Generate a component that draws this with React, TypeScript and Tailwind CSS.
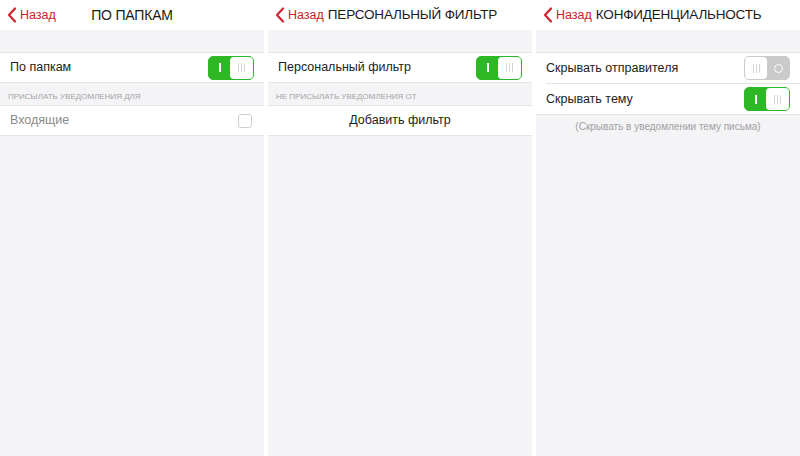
import React from "react";

const font = { fontFamily: '"Helvetica Neue", "Liberation Sans", Arial, sans-serif' };

function Chevron() {
  return (
    <svg width="10" height="16" viewBox="0 0 10 16" className="shrink-0">
      <path d="M8 1.5 L2 8 L8 14.5" fill="none" stroke="#d2232e" strokeWidth="2.2" strokeLinecap="round" strokeLinejoin="round" />
    </svg>
  );
}

function Lines({ color }: { color: string }) {
  return (
    <div className="flex gap-[2px] h-[9px]">
      <div className="w-px h-full" style={{ background: color }} />
      <div className="w-px h-full" style={{ background: color }} />
      <div className="w-px h-full" style={{ background: color }} />
    </div>
  );
}

function Toggle({ on }: { on: boolean }) {
  if (on) {
    return (
      <div className="w-[46px] h-[24px] rounded-[5px] bg-[#2fb826] border-[1.5px] border-[#2fb826] flex">
        <div className="w-[21px] h-full flex items-center justify-center">
          <div className="w-[2px] h-[9px] bg-white" />
        </div>
        <div className="flex-1 h-full bg-white rounded-[4px] flex items-center justify-center">
          <Lines color="#d4d4d4" />
        </div>
      </div>
    );
  }
  return (
    <div className="w-[46px] h-[24px] rounded-[5px] bg-[#cacaca] border-[1.5px] border-[#cacaca] flex">
      <div className="w-[22px] h-full bg-white rounded-[4px] flex items-center justify-center">
        <Lines color="#d4d4d4" />
      </div>
      <div className="flex-1 h-full flex items-center justify-center">
        <div className="w-[9px] h-[9px] rounded-full border-[1.5px] border-white" />
      </div>
    </div>
  );
}

function Header({ title, centered }: { title: string; centered?: boolean }) {
  return (
    <div className="relative h-[30px] bg-white flex items-center pl-[7px]">
      <div className="flex items-center gap-[3px]">
        <Chevron />
        <span className="text-[12.5px] text-[#c9202b]">Назад</span>
      </div>
      {centered ? (
        <div className="absolute inset-0 flex items-center justify-center pointer-events-none">
          <span className="text-[14px] text-[#1a1a1a] tracking-[-0.2px]">{title}</span>
        </div>
      ) : (
        <span className="ml-[4px] text-[13.5px] text-[#1a1a1a] tracking-[-0.2px]">{title}</span>
      )}
    </div>
  );
}

function Panel({ children }: { children: React.ReactNode }) {
  return <div className="w-[264px] h-[456px] bg-[#f4f4f6] flex flex-col">{children}</div>;
}

export default function App() {
  return (
    <div className="w-[800px] h-[456px] bg-white flex gap-[4px] overflow-hidden" style={font}>
      <Panel>
        <Header title="ПО ПАПКАМ" centered />
        <div className="h-[22px]" />
        <div className="h-[31px] bg-white border-y border-[#e4e4e6] flex items-center justify-between pl-[10px] pr-[10px]">
          <span className="text-[12.5px] text-[#222]">По папкам</span>
          <Toggle on />
        </div>
        <div className="h-[22px] flex items-end pb-[2px] pl-[8px]">
          <span className="text-[8px] text-[#a3a3a3] uppercase">Присылать уведомления для</span>
        </div>
        <div className="h-[31px] bg-white border-y border-[#e4e4e6] flex items-center justify-between pl-[10px] pr-[12px]">
          <span className="text-[12.5px] text-[#8a8a8a]">Входящие</span>
          <div className="w-[14px] h-[14px] rounded-[3px] border border-[#cfcfcf] bg-white" />
        </div>
      </Panel>
      <Panel>
        <Header title="ПЕРСОНАЛЬНЫЙ ФИЛЬТР" />
        <div className="h-[22px]" />
        <div className="h-[31px] bg-white border-y border-[#e4e4e6] flex items-center justify-between pl-[10px] pr-[10px]">
          <span className="text-[12.5px] text-[#222]">Персональный фильтр</span>
          <Toggle on />
        </div>
        <div className="h-[22px] flex items-end pb-[2px] pl-[8px]">
          <span className="text-[8px] text-[#a3a3a3] uppercase">Не присылать уведомления от</span>
        </div>
        <div className="h-[31px] bg-white border-y border-[#e4e4e6] flex items-center justify-center">
          <span className="text-[12.5px] text-[#222]">Добавить фильтр</span>
        </div>
      </Panel>
      <Panel>
        <Header title="КОНФИДЕНЦИАЛЬНОСТЬ" />
        <div className="h-[22px]" />
        <div className="bg-white border-y border-[#e4e4e6]">
          <div className="h-[30px] flex items-center justify-between pl-[10px] pr-[10px]">
            <span className="text-[12.5px] text-[#222]">Скрывать отправителя</span>
            <Toggle on={false} />
          </div>
          <div className="ml-[10px] h-px bg-[#e4e4e6]" />
          <div className="h-[30px] flex items-center justify-between pl-[10px] pr-[10px]">
            <span className="text-[12.5px] text-[#222]">Скрывать тему</span>
            <Toggle on />
          </div>
        </div>
        <div className="pt-[4px] flex justify-center">
          <span className="text-[10px] text-[#a0a0a0]">(Скрывать в уведомлении тему письма)</span>
        </div>
      </Panel>
    </div>
  );
}
